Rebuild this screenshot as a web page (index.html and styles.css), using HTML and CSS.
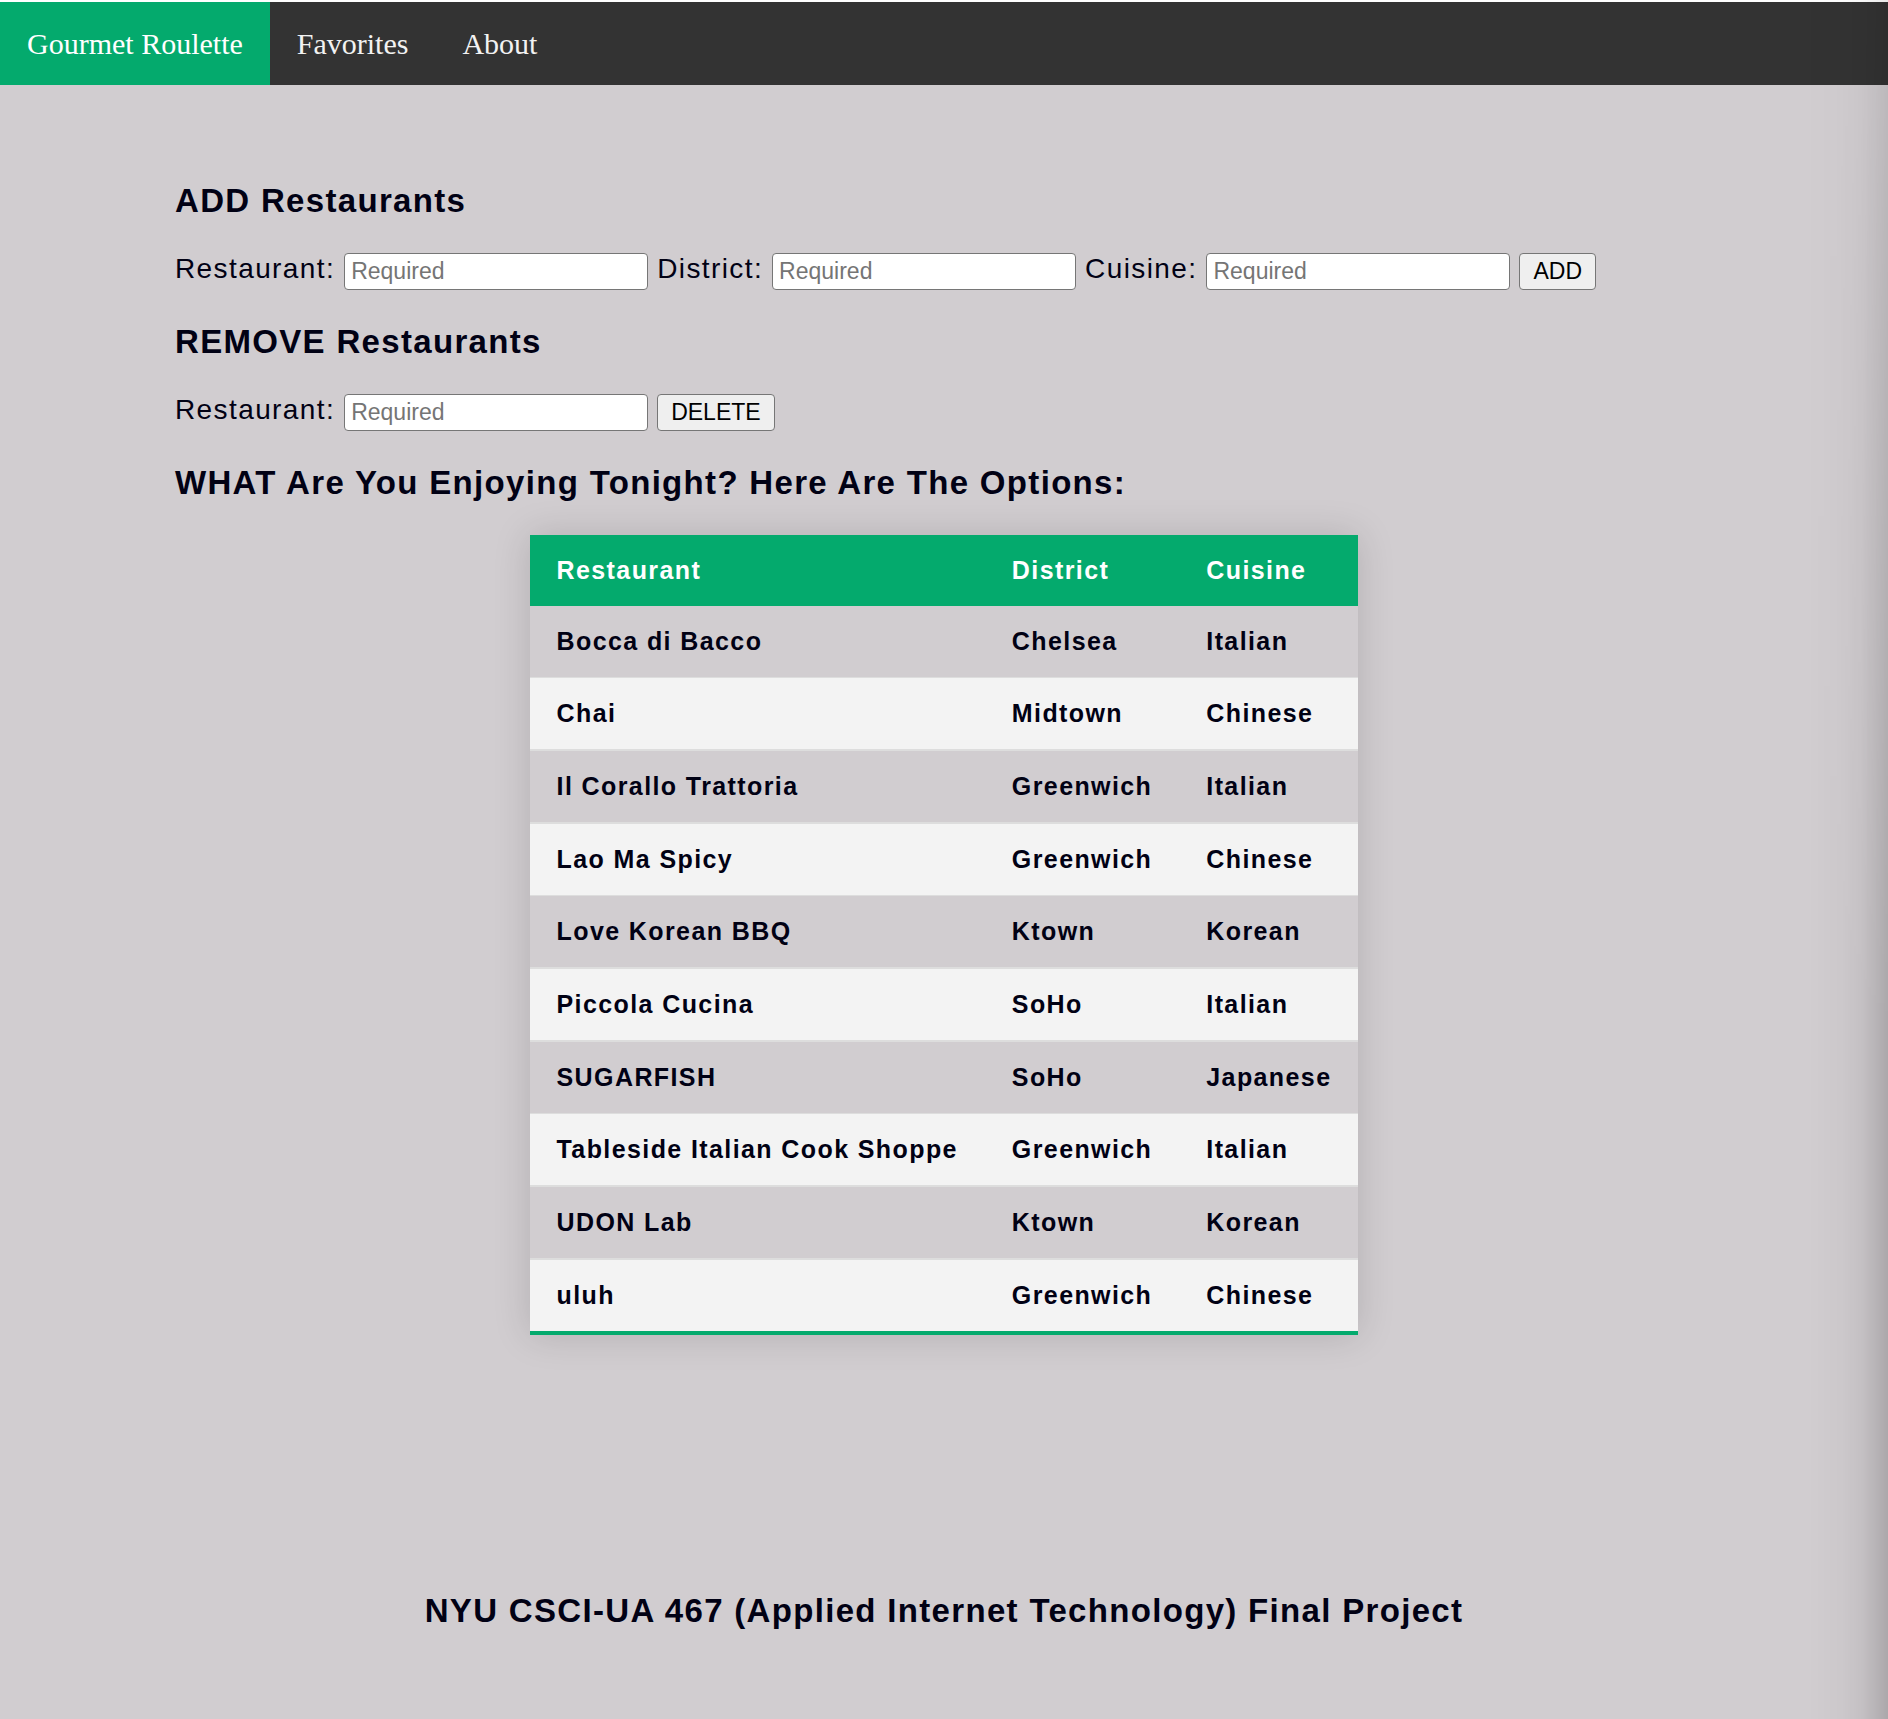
FILE: index.html
```
<!DOCTYPE html>
<html lang="en">
<head>
  <meta charset="utf-8">
  <meta name="viewport" content="width=device-width, initial-scale=1">
  <title>Gourmet Roulette</title>
  <link rel="stylesheet" href="styles.css">
</head>
<body>
  <nav class="topnav">
    <a class="active" href="#home">Gourmet Roulette</a>
    <a href="#favorites">Favorites</a>
    <a href="#about">About</a>
  </nav>

  <main class="content">
    <h3>ADD Restaurants</h3>
    <form class="entry-form">
      <label for="add-name">Restaurant:</label>
      <input id="add-name" type="text" placeholder="Required" required>
      <label for="add-district">District:</label>
      <input id="add-district" type="text" placeholder="Required" required>
      <label for="add-cuisine">Cuisine:</label>
      <input id="add-cuisine" type="text" placeholder="Required" required>
      <button type="submit">ADD</button>
    </form>

    <h3>REMOVE Restaurants</h3>
    <form class="entry-form">
      <label for="remove-name">Restaurant:</label>
      <input id="remove-name" type="text" placeholder="Required" required>
      <button type="submit">DELETE</button>
    </form>

    <h3>WHAT Are You Enjoying Tonight? Here Are The Options:</h3>
    <table class="restaurants">
      <thead>
        <tr><th>Restaurant</th><th>District</th><th>Cuisine</th></tr>
      </thead>
      <tbody>
        <tr><td>Bocca di Bacco</td><td>Chelsea</td><td>Italian</td></tr>
        <tr><td>Chai</td><td>Midtown</td><td>Chinese</td></tr>
        <tr><td>Il Corallo Trattoria</td><td>Greenwich</td><td>Italian</td></tr>
        <tr><td>Lao Ma Spicy</td><td>Greenwich</td><td>Chinese</td></tr>
        <tr><td>Love Korean BBQ</td><td>Ktown</td><td>Korean</td></tr>
        <tr><td>Piccola Cucina</td><td>SoHo</td><td>Italian</td></tr>
        <tr><td>SUGARFISH</td><td>SoHo</td><td>Japanese</td></tr>
        <tr><td>Tableside Italian Cook Shoppe</td><td>Greenwich</td><td>Italian</td></tr>
        <tr><td>UDON Lab</td><td>Ktown</td><td>Korean</td></tr>
        <tr><td>uluh</td><td>Greenwich</td><td>Chinese</td></tr>
      </tbody>
    </table>
  </main>

  <footer class="footer">
    <h3>NYU CSCI-UA 467 (Applied Internet Technology) Final Project</h3>
  </footer>
</body>
</html>
```
FILE: styles.css
```
* {
  box-sizing: border-box;
}

html {
  min-height: 100%;
  background: #d1cdd0;
}

body {
  margin: 0;
  border-top: 2px solid #fff;
  color: #010114;
  font: 28px/32px "Liberation Sans", Arial, sans-serif;
  letter-spacing: 0.05em;
}

/* soft shade down the right edge of the window */
body::after {
  content: "";
  position: fixed;
  top: 0;
  right: 0;
  bottom: 0;
  width: 80px;
  pointer-events: none;
  background: linear-gradient(to left,
    rgba(0, 0, 0, 0.18),
    rgba(0, 0, 0, 0.12) 15%,
    rgba(0, 0, 0, 0.06) 33%,
    rgba(0, 0, 0, 0.02) 60%,
    transparent);
  mask-image: linear-gradient(rgba(0, 0, 0, 0.5), #000 60%);
}

.topnav {
  display: flex;
  flex-wrap: wrap;
  background: #333;
  font: 30px/35px "Liberation Serif", "Times New Roman", serif;
  letter-spacing: normal;
}

.topnav a {
  padding: 24px 27px;
  color: #f2f2f2;
  text-decoration: none;
}

.topnav .active {
  background: #04aa6d;
  color: #fff;
}

h3 {
  margin: 33px 0;
  font-size: 33px;
  line-height: 38px;
  letter-spacing: 0.04em;
}

.content {
  padding: 64px 175px 0;
}

.entry-form {
  display: flex;
  flex-wrap: wrap;
  align-items: flex-start;
  gap: 9px;
}

.entry-form input,
.entry-form button {
  height: 37px;
  border: 1px solid #767676;
  border-radius: 4px;
  font: 23px/27px "Liberation Sans", Arial, sans-serif;
}

.entry-form input {
  width: 304px;
  padding: 2px 6px;
  background: #fff;
}

.entry-form input::placeholder {
  color: #757575;
}

.entry-form button {
  padding: 2px 13px;
  background: #efefef;
  color: #000;
}

.restaurants {
  margin: 0 auto;
  border-spacing: 0;
  border-bottom: 4px solid #04aa6d;
  box-shadow: 0 0 35px rgba(0, 0, 0, 0.15);
  font-size: 25px;
  font-weight: bold;
  line-height: 29px;
  text-align: left;
}

.restaurants th,
.restaurants td {
  padding: 21px 27px;
}

.restaurants th {
  background: #04aa6d;
  color: #fff;
}

.restaurants td {
  border-bottom: 2px solid #ddd;
}

.restaurants tr:nth-child(3n + 1) td {
  border-bottom-width: 1px;
}

.restaurants tr:nth-child(even) td {
  background: #f3f3f3;
}

.restaurants tr:last-child td {
  border-bottom: 0;
}

.footer {
  padding: 224px 24px 56px;
  text-align: center;
}
```
